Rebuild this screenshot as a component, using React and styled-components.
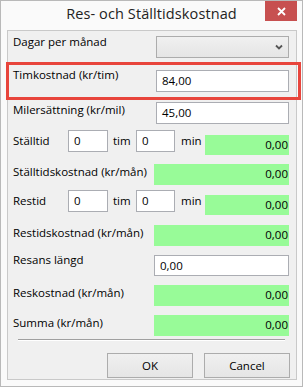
import styled, { createGlobalStyle } from "styled-components";

const GlobalStyle = createGlobalStyle`
  html, body {
    margin: 0;
    padding: 0;
    background: #ffffff;
  }
  * {
    box-sizing: border-box;
  }
`;

const Window = styled.div`
  width: 303px;
  height: 387px;
  border: 1px solid #b9b9b9;
  background: #fafafa;
  display: flex;
  flex-direction: column;
  font-family: "Segoe UI", "Open Sans", "Noto Sans", sans-serif;
  font-size: 11.5px;
  color: #000;
`;

const TitleBar = styled.div`
  height: 29px;
  display: grid;
  grid-template-columns: 1fr auto 1fr;
  align-items: start;
`;

const Title = styled.div`
  grid-column: 2;
  font-size: 14.5px;
  line-height: 20px;
  padding-top: 3px;
  color: #222;
  letter-spacing: 0.1px;
`;

const CloseButton = styled.div`
  grid-column: 3;
  justify-self: end;
  width: 32px;
  height: 20px;
  margin-right: 5px;
  background: #c75050;
  display: flex;
  align-items: center;
  justify-content: center;
`;

const Client = styled.div`
  flex: 1;
  margin: 0 5px 6px 6px;
  border: 1px solid #c9c9c9;
  background: #f0f0f0;
  display: flex;
  flex-direction: column;
`;

const Row = styled.div`
  position: relative;
  display: flex;
  align-items: flex-start;
  height: ${(p) => p.$h}px;
  padding-left: 5px;
  padding-right: 7px;
`;

const Highlight = styled.div`
  position: absolute;
  left: -2px;
  right: -5px;
  top: 0;
  bottom: 0;
  border: 3px solid #e8453c;
  pointer-events: none;
`;

const Label = styled.div`
  margin-top: ${(p) => p.$top}px;
  line-height: 16px;
  white-space: nowrap;
  width: ${(p) => (p.$w ? `${p.$w}px` : "auto")};
  flex-shrink: 0;
`;

const Unit = styled.div`
  margin-top: ${(p) => p.$top}px;
  line-height: 16px;
  width: ${(p) => p.$w}px;
  padding-left: ${(p) => p.$pl}px;
  flex-shrink: 0;
`;

const TextBox = styled.div`
  margin-top: ${(p) => p.$top}px;
  margin-left: ${(p) => (p.$w ? "0" : "auto")};
  width: ${(p) => (p.$w ? `${p.$w}px` : `${p.$fw || 133}px`)};
  height: ${(p) => p.$hh || 22}px;
  background: #ffffff;
  border: 1px solid #abadb3;
  padding: 2px 0 0 5px;
  line-height: 16px;
  flex-shrink: 0;
`;

const Combo = styled.div`
  margin-top: ${(p) => p.$top}px;
  margin-left: auto;
  width: 133px;
  height: 22px;
  border: 1px solid #acacac;
  background: linear-gradient(#f0f0f0, #e5e5e5);
  display: flex;
  align-items: center;
  justify-content: flex-end;
  padding-right: 5px;
`;

const GreenBox = styled.div`
  margin-top: ${(p) => p.$top}px;
  margin-left: auto;
  width: ${(p) => p.$w}px;
  height: ${(p) => p.$hh || 20}px;
  background: #98fb98;
  text-align: right;
  padding: 2px 1px 0 0;
  line-height: 16px;
  flex-shrink: 0;
`;

const Separator = styled.div`
  margin: 0 11px 0 10px;
  height: 2px;
  border-top: 1px solid #a0a0a0;
  border-bottom: 1px solid #ffffff;
`;

const ButtonBar = styled.div`
  display: flex;
  justify-content: flex-end;
  gap: 11px;
  padding: 12px 6px 0 0;
`;

const Button = styled.div`
  width: 86px;
  height: 25px;
  border: 1px solid #acacac;
  background: linear-gradient(#f0f0f0, #e5e5e5);
  display: flex;
  align-items: center;
  justify-content: center;
  line-height: 16px;
`;

const Chevron = () => (
  <svg width="8" height="6" viewBox="0 0 8 6">
    <path d="M1 1.5 L4 4.5 L7 1.5" stroke="#555" strokeWidth="1.8" fill="none" />
  </svg>
);

const CloseIcon = () => (
  <svg width="9" height="9" viewBox="0 0 9 9">
    <path d="M1 1 L8 8 M8 1 L1 8" stroke="#fff" strokeWidth="1.8" />
  </svg>
);

function TimeRow({ label, h, top }) {
  return (
    <Row $h={h}>
      <Label $top={top + 3} $w={55}>{label}</Label>
      <TextBox $top={top} $w={40}>0</TextBox>
      <Unit $top={top + 3} $w={28} $pl={5}>tim</Unit>
      <TextBox $top={top} $w={39}>0</TextBox>
      <Unit $top={top + 3} $w={30} $pl={6}>min</Unit>
      <GreenBox $top={top + 5} $w={84}>0,00</GreenBox>
    </Row>
  );
}

function CostRow({ label, h, top }) {
  return (
    <Row $h={h}>
      <Label $top={top}>{label}</Label>
      <GreenBox $top={top} $w={135} $hh={21}>0,00</GreenBox>
    </Row>
  );
}

export default function App() {
  return (
    <>
      <GlobalStyle />
      <Window>
        <TitleBar>
          <Title>Res- och Ställtidskostnad</Title>
          <CloseButton>
            <CloseIcon />
          </CloseButton>
        </TitleBar>
        <Client>
          <Row $h={31}>
            <Label $top={3}>Dagar per månad</Label>
            <Combo $top={5}>
              <Chevron />
            </Combo>
          </Row>
          <Row $h={38}>
            <Highlight />
            <Label $top={5}>Timkostnad (kr/tim)</Label>
            <TextBox $top={8}>84,00</TextBox>
          </Row>
          <Row $h={27}>
            <Label $top={2}>Milersättning (kr/mil)</Label>
            <TextBox $top={2}>45,00</TextBox>
          </Row>
          <TimeRow label="Ställtid" h={33} top={3} />
          <CostRow label="Ställtidskostnad (kr/mån)" h={30} top={4} />
          <TimeRow label="Restid" h={32} top={0} />
          <CostRow label="Restidskostnad (kr/mån)" h={30} top={3} />
          <Row $h={30}>
            <Label $top={0}>Resans längd</Label>
            <TextBox $top={3} $fw={135} $hh={21}>0,00</TextBox>
          </Row>
          <CostRow label="Reskostnad (kr/mån)" h={30} top={3} />
          <CostRow label="Summa (kr/mån)" h={27} top={3} />
          <Separator />
          <ButtonBar>
            <Button>OK</Button>
            <Button>Cancel</Button>
          </ButtonBar>
        </Client>
      </Window>
    </>
  );
}
